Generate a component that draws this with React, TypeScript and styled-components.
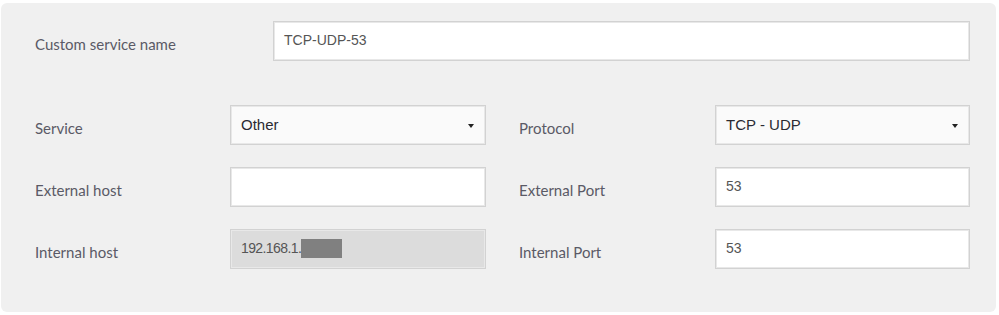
import styled, { createGlobalStyle } from "styled-components";

const GlobalStyle = createGlobalStyle`
  body {
    margin: 0;
    background: #fff;
    font-family: Lato, "Open Sans", sans-serif;
  }
`;

const Panel = styled.section`
  width: 995px;
  margin: 3px 0 0 1px;
  padding: 18px 26px 43px 34px;
  box-sizing: border-box;
  background-color: #f0f0f0;
  border-radius: 6px;
`;

const NameRow = styled.div`
  display: flex;
  align-items: center;
  margin-bottom: 44px;
`;

const Grid = styled.div`
  display: grid;
  grid-template-columns: 195px 256px 229px 255px;
  row-gap: 22px;
  align-items: center;
  & > :nth-child(4n + 3) {
    padding-left: 33px;
  }
`;

const Label = styled.label<{ $width?: number }>`
  width: ${(p) => (p.$width ? `${p.$width}px` : "auto")};
  flex-shrink: 0;
  font-size: 15px;
  color: #5a5a66;
  padding-top: 6px;
`;

const Field = styled.div<{ $variant?: "input" | "select" | "disabled" }>`
  position: relative;
  display: flex;
  align-items: center;
  flex: 1;
  height: 40px;
  box-sizing: border-box;
  padding: 0 10px 2px;
  border: 1px solid #d2d2d2;
  box-shadow: inset 0 0 0 1px #e8e8e8;
  background-color: ${(p) =>
    p.$variant === "select" ? "#fafafa" : p.$variant === "disabled" ? "#dcdcdc" : "#fff"};
  font-family: "Liberation Sans", Arial, sans-serif;
  font-size: ${(p) => (p.$variant === "select" ? "15px" : "14px")};
  letter-spacing: ${(p) => (p.$variant === "disabled" ? "-0.6px" : "0")};
  color: ${(p) => (p.$variant === "select" ? "#2a2a33" : "#555")};
`;

const Caret = styled.span`
  position: absolute;
  right: 11px;
  top: 18px;
  width: 0;
  height: 0;
  border-left: 3px solid transparent;
  border-right: 3px solid transparent;
  border-top: 4px solid #222;
`;

const Redacted = styled.span`
  display: inline-block;
  width: 41px;
  height: 19px;
  background-color: #808080;
`;

export default function App() {
  return (
    <>
      <GlobalStyle />
      <Panel>
        <NameRow>
          <Label $width={238}>Custom service name</Label>
          <Field>TCP-UDP-53</Field>
        </NameRow>
        <Grid>
          <Label>Service</Label>
          <Field $variant="select">
            Other
            <Caret />
          </Field>
          <Label>Protocol</Label>
          <Field $variant="select">
            TCP - UDP
            <Caret />
          </Field>

          <Label>External host</Label>
          <Field />
          <Label>External Port</Label>
          <Field>53</Field>

          <Label>Internal host</Label>
          <Field $variant="disabled">
            192.168.1.
            <Redacted />
          </Field>
          <Label>Internal Port</Label>
          <Field>53</Field>
        </Grid>
      </Panel>
    </>
  );
}
